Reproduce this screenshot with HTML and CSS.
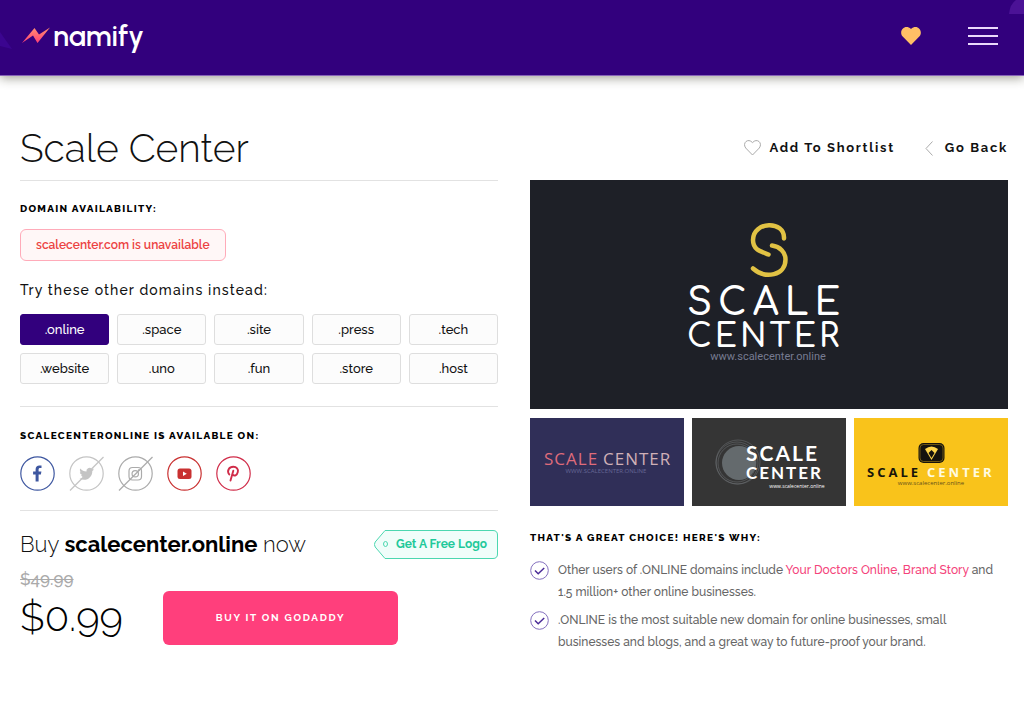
FILE: index.html
```html
<!DOCTYPE html>
<html lang="en">
<head>
<meta charset="utf-8">
<meta name="viewport" content="width=device-width, initial-scale=1">
<title>Scale Center - Namify</title>
<link rel="stylesheet" href="styles.css">
</head>
<body>
<header class="site-header">
  <svg class="corner corner-left" viewBox="0 0 12 20" aria-hidden="true"><path d="M0 0 12 17 0 14Z"/></svg>
  <svg class="corner corner-right" viewBox="0 0 15 15" aria-hidden="true"><path d="M15 0v14H0Q1 4 7 0Z"/></svg>
  <a class="brand" href="#">
    <svg class="brand-mark" viewBox="0 0 28 17" aria-hidden="true">
      <defs><linearGradient id="bolt" x1="0" y1="0" x2="0" y2="1"><stop offset="0" stop-color="#ff9270"/><stop offset="1" stop-color="#ff3d78"/></linearGradient></defs>
      <path fill="url(#bolt)" d="M0 16 12.500 1l4.500 6.500L28 .5 15.500 16 11 8.500Z"/>
    </svg>
    <span>namify</span>
  </a>
  <nav class="header-nav">
    <a class="icon-link" href="#" aria-label="Shortlist">
      <svg class="heart-solid" viewBox="0 0 20 18" aria-hidden="true"><path d="M10 18 1.700 9.600C-3 4 4-3.500 10 2c6-5.500 13 2 8.300 7.600Z"/></svg>
    </a>
    <button class="menu-button" type="button" aria-label="Menu"><i></i><i></i><i></i></button>
  </nav>
</header>

<main class="page">
  <section class="column">
    <h1 class="title">Scale Center</h1>
    <div class="block domains">
      <h2 class="label">Domain availability:</h2>
      <p class="notice">scalecenter.com is unavailable</p>
      <p class="hint">Try these other domains instead:</p>
      <div class="domain-grid">
        <button class="domain selected" type="button">.online</button>
        <button class="domain" type="button">.space</button>
        <button class="domain" type="button">.site</button>
        <button class="domain" type="button">.press</button>
        <button class="domain" type="button">.tech</button>
        <button class="domain" type="button">.website</button>
        <button class="domain" type="button">.uno</button>
        <button class="domain" type="button">.fun</button>
        <button class="domain" type="button">.store</button>
        <button class="domain" type="button">.host</button>
      </div>
    </div>
    <div class="block handles">
      <h2 class="label">scalecenteronline is available on:</h2>
      <div class="socials">
        <a class="social facebook" href="#" aria-label="Facebook"><svg viewBox="0 0 35 35" aria-hidden="true"><circle cx="17.500" cy="17.500" r="16.700"/><path class="solid" d="M15.600 25.500v-7h-2.500v-2.900h2.500v-2.200c0-2.600 1.500-4 3.800-4l2.100.2v2.500h-1.300c-1.200 0-1.600.7-1.600 1.500v2h2.800l-.5 2.900h-2.300v7Z"/></svg></a>
        <a class="social twitter" href="#" aria-label="Twitter"><svg viewBox="0 0 35 35" aria-hidden="true"><circle cx="17.500" cy="17.500" r="16.700"/><path class="solid" d="M25 13.300c-.5.300-1.100.5-1.700.5.600-.4 1-.9 1.300-1.600-.6.300-1.200.6-1.900.7a3 3 0 0 0-5.200 2.700c-2.500-.1-4.700-1.300-6.200-3.100-.8 1.400-.4 3.100.9 4-.5 0-.9-.1-1.300-.4 0 1.500 1 2.700 2.400 3-.4.100-.9.100-1.300 0 .4 1.200 1.500 2 2.800 2.100-1.200 1-2.800 1.400-4.400 1.200 6 3.800 13.200-.5 12.900-7.400.7-.4 1.300-1 1.700-1.700Z"/><path d="M1 34.500 34.500 1"/></svg></a>
        <a class="social instagram" href="#" aria-label="Instagram"><svg viewBox="0 0 35 35" aria-hidden="true"><circle cx="17.500" cy="17.500" r="16.700"/><rect x="11" y="11.500" width="12.500" height="12.500" rx="3.500"/><circle cx="17.250" cy="17.750" r="3.200"/><circle cx="20.800" cy="14.200" r=".4"/><path d="M1 34.500 34.500 1"/></svg></a>
        <a class="social youtube" href="#" aria-label="YouTube"><svg viewBox="0 0 35 35" aria-hidden="true"><circle cx="17.500" cy="17.500" r="16.700"/><rect class="solid" x="10.500" y="12.500" width="14" height="10.500" rx="2.500"/><path class="play" d="M16 15.500v4.400l3.800-2.200Z"/></svg></a>
        <a class="social pinterest" href="#" aria-label="Pinterest"><svg viewBox="0 0 35 35" aria-hidden="true"><circle cx="17.500" cy="17.500" r="16.700"/><path class="pin" d="M13.300 18.500c-3-4 0-7.700 4-7.700 3.300 0 5.300 2.200 4.500 5.300-.8 3.400-3.500 4.300-5 2.600M17.300 14.700 14.500 24.500"/></svg></a>
      </div>
    </div>
    <div class="purchase">
      <div class="purchase-head">
        <p class="buy-line">Buy <strong>scalecenter.online</strong> now</p>
        <a class="logo-tag" href="#">
          <svg viewBox="0 0 124 29" aria-hidden="true"><path d="M11 .5h108q4.500 0 4.500 4.500v19q0 4.500-4.500 4.500H11L1.200 17q-1.600-2.500 0-5Z"/><ellipse cx="11.500" cy="14" rx="2" ry="2.500"/></svg>
          <span>Get A Free Logo</span>
        </a>
      </div>
      <div class="offer">
        <div class="prices"><del class="old-price">$49.99</del><span class="price">$0.99</span></div>
        <a class="buy-button" href="#">Buy it on GoDaddy</a>
      </div>
    </div>
  </section>

  <section class="column">
    <div class="actions">
      <a class="action" href="#"><svg class="heart-line" viewBox="0 0 17 16" aria-hidden="true"><path d="M8.500 15 1.700 8C-2 3 4-2.500 8.500 2.600 13-2.500 19 3 15.300 8Z"/></svg>Add To Shortlist</a>
      <a class="action" href="#"><svg class="chevron" viewBox="0 0 8 15" aria-hidden="true"><path d="M7.500.5 1 7.500l6.500 7"/></svg>Go Back</a>
    </div>
    <svg class="logo-main" viewBox="0 0 478 229" role="img" aria-label="Scale Center logo">
      <g class="gold"><path d="M254 58.500C255 40 223 41 223 60c0 9 6 11 15.500 14.500"/><path d="M242 65.500c8 1 13.500 7 13.500 14 0 16-20 20-32.500 9"/></g>
      <text class="word" x="157" y="135">SCALE</text>
      <text class="word small" x="157" y="167">CENTER</text>
      <text class="site" x="238" y="180">www.scalecenter.online</text>
    </svg>
    <div class="thumbs">
      <button class="thumb" type="button"><svg viewBox="0 0 154 88" role="img" aria-label="Scale Center, navy logo">
        <rect width="154" height="88" fill="#302f58"/>
        <text class="outline coral" x="14" y="47">SCALE</text><text class="outline rose" x="73" y="47">CENTER</text>
        <text class="tiny navy-site" x="76" y="55">WWW.SCALECENTER.ONLINE</text>
      </svg></button>
      <button class="thumb" type="button"><svg viewBox="0 0 154 88" role="img" aria-label="Scale Center, charcoal logo">
        <rect width="154" height="88" fill="#353535"/>
        <circle cx="47" cy="45" r="17" fill="#646a6d"/><g class="rings"><circle cx="45" cy="45" r="21"/><circle cx="46" cy="44" r="22"/><circle cx="45" cy="45" r="19"/></g>
        <text class="stencil" x="54" y="43">SCALE</text><text class="stencil lower" x="54" y="61">CENTER</text>
        <text class="tiny light-site" x="105" y="70">www.scalecenter.online</text>
      </svg></button>
      <button class="thumb" type="button"><svg viewBox="0 0 154 88" role="img" aria-label="Scale Center, yellow logo">
        <rect width="154" height="88" fill="#f9c31b"/>
        <rect x="64.500" y="25" width="26" height="20" rx="5" fill="#15130e"/><rect x="66" y="26.500" width="23" height="17" rx="3.500" fill="none" stroke="#a78318" stroke-width=".6"/>
        <path d="M71 31q6.500-5 13 0l-6.500 11Z" fill="#ffd64c"/><path d="m77.500 32 3 3-3 5-3-5Z" fill="#15130e"/>
        <text class="humanist" x="13" y="59">SCALE</text><text class="humanist white" x="73" y="59">CENTER</text>
        <text class="tiny yellow-site" x="77" y="67">www.scalecenter.online</text>
      </svg></button>
    </div>
    <h2 class="label reasons-title">That's a great choice! Here's why:</h2>
    <ul class="reasons">
      <li><svg viewBox="0 0 19 19" aria-hidden="true"><circle cx="9.500" cy="9.500" r="8.800"/><path d="m5 9.500 3.200 3.200 6-5.700"/></svg><p>Other users of .ONLINE domains include <a href="#">Your Doctors Online</a>, <a href="#">Brand Story</a> and 1.5 million+ other online businesses.</p></li>
      <li><svg viewBox="0 0 19 19" aria-hidden="true"><circle cx="9.500" cy="9.500" r="8.800"/><path d="m5 9.500 3.200 3.200 6-5.700"/></svg><p>.ONLINE is the most suitable new domain for online businesses, small businesses and blogs, and a great way to future-proof your brand.</p></li>
    </ul>
  </section>
</main>
</body>
</html>
```
FILE: styles.css
```css
* { box-sizing: border-box; }
body { margin: 0; background: #fff; color: #111; font-family: Raleway, Lato, "Open Sans", sans-serif; font-size: 14px; }
h1, h2, p, ul { margin: 0; padding: 0; }
a { color: inherit; text-decoration: none; }
button { font: inherit; padding: 0; border: 0; cursor: pointer; }
svg { display: block; }

.site-header { position: relative; display: flex; align-items: center; justify-content: space-between; height: 76px; padding: 0 26px 4px 22px; background: #32007d; border-bottom: 1px solid #8662b7; box-shadow: 0 2px 10px rgba(40, 40, 20, .45); }
.corner { position: absolute; fill: #4b1296; }
.corner-left { left: 0; top: 32px; width: 12px; fill: #3b0590; }
.corner-right { right: 0; top: 0; width: 15px; }
.brand { display: flex; align-items: center; gap: 3px; color: #fff; font-family: Urbanist, Poppins, Quicksand, Raleway, sans-serif; font-size: 29px; font-weight: 600; line-height: 40px; }
.brand-mark { width: 28px; height: 17px; }
.header-nav { display: flex; align-items: center; gap: 47px; }
.heart-solid { width: 20px; height: 18px; fill: #ffbf66; }
.menu-button { display: flex; flex-direction: column; gap: 6px; width: 30px; background: none; }
.menu-button i { height: 2px; background: #ead9fb; }

.page { display: grid; grid-template-columns: repeat(2, minmax(0, 1fr)); gap: 32px; padding: 40px 16px 0 20px; }
.title { height: 65px; padding-top: 8px; border-bottom: 1px solid #e2e2e2; font-size: 39px; font-weight: 300; line-height: 48px; }
.block { border-bottom: 1px solid #e2e2e2; }
.label { font-size: 10px; font-weight: 800; line-height: 16px; letter-spacing: .13em; text-transform: uppercase; color: #000; }
.domains { padding: 20px 0 22px; }
.notice { width: fit-content; margin-top: 12px; padding: 0 15px; border: 1px solid #ffabb9; border-radius: 6px; background: #fff7f7; color: #ec4141; font-size: 12px; font-weight: 600; line-height: 30px; }
.hint { margin: 19px 0 14px; font-size: 14px; font-weight: 500; line-height: 20px; letter-spacing: .08em; }
.domain-grid { display: grid; grid-template-columns: repeat(5, 1fr); gap: 8px; }
.domain { height: 31px; border: 1px solid #dedede; border-radius: 3px; background: #fcfcfc; color: #111; font-size: 13px; font-weight: 500; }
.domain.selected { border-color: #32007d; background: #32007d; color: #fff; }
.handles { padding: 21px 0 19px; }
.socials { display: flex; gap: 14px; margin-top: 12px; }
.social svg { width: 35px; height: 35px; fill: none; stroke: currentColor; stroke-width: 1.2; }
.social .solid { fill: currentColor; stroke: none; }
.social .play { fill: #fff; stroke: none; }
.social .pin { stroke-width: 1.900; stroke-linecap: round; }
.facebook { color: #3e57a0; }
.twitter { color: #c4c4c4; }
.instagram { color: #ababab; }
.youtube { color: #c93131; }
.pinterest { color: #d02c49; }

.purchase-head { display: flex; justify-content: space-between; align-items: center; margin-top: 18px; }
.buy-line { font-size: 22px; font-weight: 300; line-height: 30px; }
.buy-line strong { font-weight: 700; color: #000; }
.logo-tag { display: grid; width: 124px; height: 29px; align-items: center; color: #1fc99a; font-size: 12px; font-weight: 700; }
.logo-tag svg, .logo-tag span { grid-area: 1 / 1; }
.logo-tag svg { fill: #f0fdfa; stroke: #4cd7b0; }
.logo-tag span { padding-left: 22px; }
.offer { display: flex; align-items: flex-end; gap: 40px; margin-top: 10px; }
.prices { display: flex; flex-direction: column; width: 103px; }
.old-price { color: #aaa; font-size: 17px; font-weight: 500; line-height: 20px; }
.price { color: #000; font-size: 40px; font-weight: 300; line-height: 56px; }
.buy-button { flex: 0 1 235px; border-radius: 6px; background: #ff3f7c; color: #fff; font-size: 10px; font-weight: 700; line-height: 54px; letter-spacing: .17em; text-align: center; text-transform: uppercase; }

.actions { display: flex; height: 64px; justify-content: flex-end; align-items: center; gap: 30px; }
.action { display: flex; align-items: center; gap: 8px; font-size: 13px; font-weight: 700; line-height: 20px; letter-spacing: .13em; }
.action svg { fill: none; stroke: #aaa; }
.heart-line { width: 17px; height: 16px; }
.chevron { width: 8px; height: 15px; margin-right: 4px; }
.logo-main { width: 100%; background: #1e2027; }
.gold { fill: none; stroke: #e1c244; stroke-width: 4.500; stroke-linecap: round; }
.word { fill: #fff; font: 600 37px Comfortaa, Quicksand, Inter, sans-serif; letter-spacing: 6px; }
.word.small { font-size: 32px; letter-spacing: 3px; }
.site { fill: #777b91; font: 400 11px Roboto, sans-serif; text-anchor: middle; }
.thumbs { display: grid; grid-template-columns: repeat(3, 1fr); gap: 8px; margin-top: 9px; }
.thumb { background: none; }
.thumb svg { width: 100%; }
.outline { font: 400 17px "Open Sans", sans-serif; letter-spacing: 1px; }
.coral { fill: #df6b7b; }
.rose { fill: #cfb0b7; }
.tiny { font-family: "Open Sans", sans-serif; text-anchor: middle; }
.navy-site { fill: #666796; font-size: 6px; }
.rings { fill: none; stroke: #717578; stroke-width: .5; }
.stencil { fill: #fff; font: 700 21px Lato, sans-serif; letter-spacing: 2px; }
.stencil.lower { font-size: 17px; }
.light-site { fill: #fff; font-size: 5px; }
.humanist { fill: #17140a; font: 700 13px "Open Sans", sans-serif; letter-spacing: 3px; }
.humanist.white { fill: #fffbe0; }
.yellow-site { fill: #66511a; font-size: 6px; }
.reasons-title { margin-top: 24px; }
.reasons { display: grid; gap: 6px; margin-top: 13px; list-style: none; }
.reasons li { display: grid; grid-template-columns: 19px 1fr; gap: 9px; }
.reasons svg { width: 19px; height: 19px; margin-top: 2px; fill: none; stroke: #8470be; }
.reasons svg path { stroke: #4a2a98; stroke-width: 1.500; }
.reasons p { color: #666; font-size: 12px; font-weight: 500; line-height: 22px; }
.reasons a { color: #f4437b; }
```
